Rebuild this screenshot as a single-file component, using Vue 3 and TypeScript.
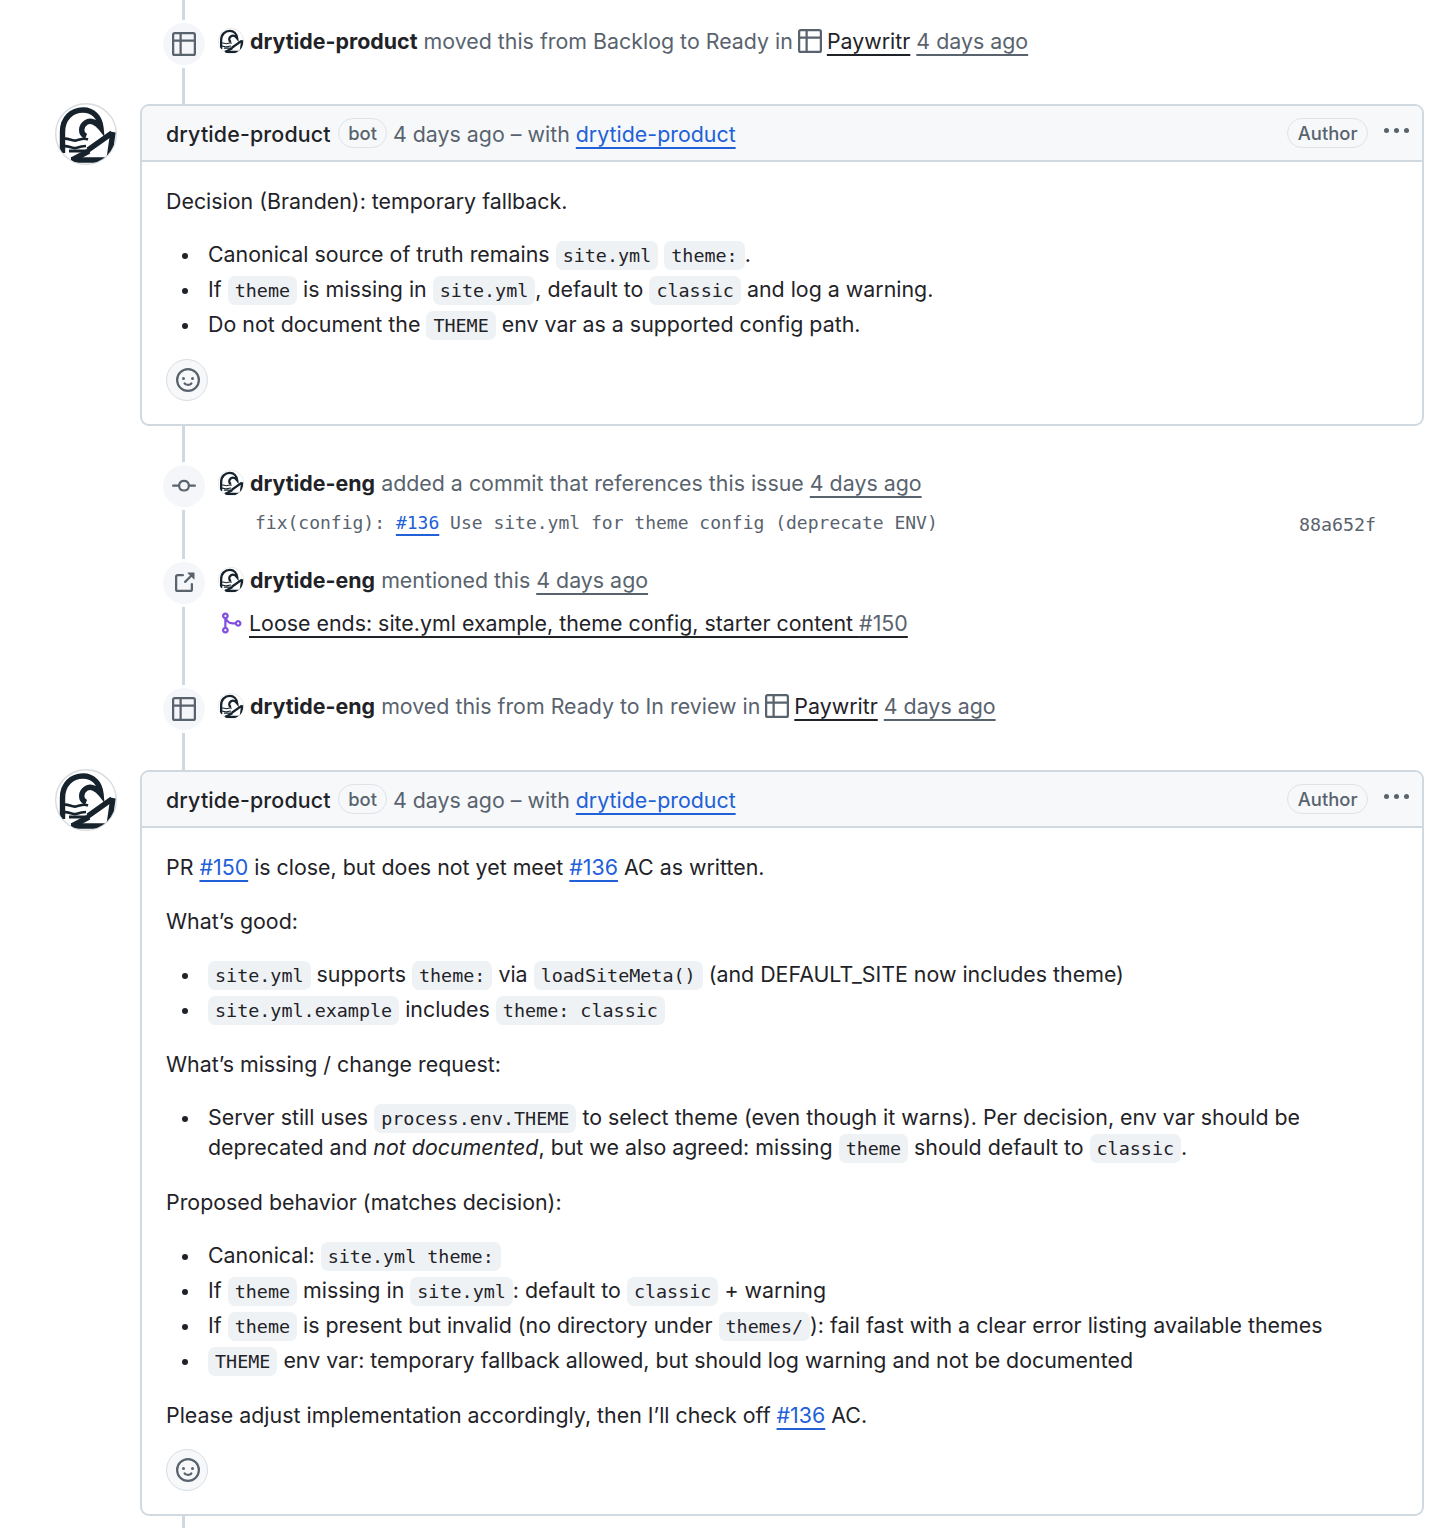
<script setup lang="ts">
const icons: Record<string, string> = {
  table: 'M0 1.75C0 .784.784 0 1.75 0h12.5C15.216 0 16 .784 16 1.75v12.5A1.75 1.75 0 0 1 14.25 16H1.75A1.75 1.75 0 0 1 0 14.25ZM6.5 6.5v8h7.75a.25.25 0 0 0 .25-.25V6.5Zm8-1.5V1.75a.25.25 0 0 0-.25-.25H6.5V5Zm-13 1.5v7.75c0 .138.112.25.25.25H5v-8ZM5 5V1.5H1.75a.25.25 0 0 0-.25.25V5Z',
  commit: 'M11.93 8.5a4.002 4.002 0 0 1-7.86 0H.75a.75.75 0 0 1 0-1.5h3.32a4.002 4.002 0 0 1 7.86 0h3.32a.75.75 0 0 1 0 1.5Zm-1.43-.75a2.5 2.5 0 1 0-5 0 2.5 2.5 0 0 0 5 0Z',
  external: 'M3.75 2h3.5a.75.75 0 0 1 0 1.5h-3.5a.25.25 0 0 0-.25.25v8.5c0 .138.112.25.25.25h8.5a.25.25 0 0 0 .25-.25v-3.5a.75.75 0 0 1 1.5 0v3.5A1.75 1.75 0 0 1 12.25 14h-8.5A1.75 1.75 0 0 1 2 12.25v-8.5C2 2.784 2.784 2 3.75 2Zm6.854-1h4.146a.25.25 0 0 1 .25.25v4.146a.25.25 0 0 1-.427.177L13.03 4.03 9.28 7.78a.751.751 0 0 1-1.042-.018.751.751 0 0 1-.018-1.042l3.75-3.75-1.543-1.543A.25.25 0 0 1 10.604 1Z',
  merge: 'M5.45 5.154A4.25 4.25 0 0 0 9.25 7.5h1.378a2.251 2.251 0 1 1 0 1.5H9.25A5.734 5.734 0 0 1 5 7.123v3.505a2.25 2.25 0 1 1-1.5 0V5.372a2.25 2.25 0 1 1 1.95-.218ZM4.25 13.5a.75.75 0 1 0 0-1.5.75.75 0 0 0 0 1.5Zm8.5-4.5a.75.75 0 1 0 0-1.5.75.75 0 0 0 0 1.5ZM5 3.25a.75.75 0 1 0 0 .005V3.25Z',
  smiley: 'M8 0a8 8 0 1 1 0 16A8 8 0 0 1 8 0ZM1.5 8a6.5 6.5 0 1 0 13 0 6.5 6.5 0 0 0-13 0Zm3.82 1.636a.75.75 0 0 1 1.038.175l.007.009c.103.118.22.222.35.31.264.178.683.37 1.285.37.602 0 1.02-.192 1.285-.371.13-.088.247-.192.35-.31l.007-.008a.75.75 0 0 1 1.222.87l-.022-.015c.02.013.021.015.021.015v.001l-.001.002-.002.003-.005.007-.014.019a2.066 2.066 0 0 1-.184.213c-.16.166-.338.316-.53.445-.63.418-1.37.638-2.127.629-.946 0-1.652-.308-2.126-.63a3.331 3.331 0 0 1-.715-.657l-.014-.02-.005-.006-.002-.003v-.002h-.001l.613-.432-.614.43a.75.75 0 0 1 .183-1.044ZM12 7a1 1 0 1 1-2 0 1 1 0 0 1 2 0ZM5 8a1 1 0 1 1 0-2 1 1 0 0 1 0 2Zm5.25 2.25.592.416a97.71 97.71 0 0 0-.592-.416Z',
}
</script>

<template>
  <div class="page">
    <div class="rail"></div>
    <svg width="0" height="0" class="defs" aria-hidden="true">
      <symbol id="logo" viewBox="0 0 62 62">
        <clipPath id="logo-clip"><circle cx="31" cy="31" r="30" /></clipPath>
        <circle cx="31" cy="31" r="30.300" fill="#fff" stroke="#d8dce0" stroke-width="1.400" />
        <g clip-path="url(#logo-clip)" fill="none" stroke="#16232d">
          <path d="M7.500 50V29C7.500 15 17 7 28 7 38 7 45 14 46 25 41 18.500 35 17 31 19.500 25.500 23 25 31 31 33.500" stroke-width="5.400" />
          <path d="M7 36.500c5-3 9 2 14 1s7-3 12-1M7 44c5-3 9 2 14 1 3-1 6-2 10-2" stroke-width="2.600" />
          <path d="M58 29 54 57H16M57 30 33 47" stroke-width="5.400" />
          <path d="M14 48H35" stroke-width="3" />
          <path d="M34 48 17 57" stroke-width="5.400" />
        </g>
      </symbol>
    </svg>

    <div class="event first">
      <span class="badge"><svg class="oct" viewBox="0 0 16 16"><path :d="icons.table" /></svg></span>
      <div class="event-main">
        <div class="line">
          <svg class="mini"><use href="#logo" /></svg>
          <strong>drytide-product</strong>
          <span class="muted">moved this from Backlog to Ready in</span>
          <svg class="oct inline-oct" viewBox="0 0 16 16"><path :d="icons.table" /></svg>
          <a class="plain">Paywritr</a>
          <a class="time">4 days ago</a>
        </div>
      </div>
    </div>

    <div class="comment">
      <svg class="avatar"><use href="#logo" /></svg>
      <div class="card">
        <div class="card-head">
          <span class="author">drytide-product</span>
          <span class="pill">bot</span>
          <span class="head-meta">4 days ago – with <a class="link">drytide-product</a></span>
          <span class="pill author-pill">Author</span>
          <span class="dots"><i></i><i></i><i></i></span>
        </div>
        <div class="card-body body-a">
          <p>Decision (Branden): temporary fallback.</p>
          <ul>
            <li>Canonical source of truth remains <code>site.yml</code> <code>theme:</code>.</li>
            <li>If <code>theme</code> is missing in <code>site.yml</code>, default to <code>classic</code> and log a warning.</li>
            <li>Do not document the <code>THEME</code> env var as a supported config path.</li>
          </ul>
          <button class="react"><svg class="oct" viewBox="0 0 16 16"><path :d="icons.smiley" /></svg></button>
        </div>
      </div>
    </div>

    <div class="event second">
      <span class="badge"><svg class="oct" viewBox="0 0 16 16"><path :d="icons.commit" /></svg></span>
      <div class="event-main">
        <div class="line">
          <svg class="mini"><use href="#logo" /></svg>
          <strong>drytide-eng</strong>
          <span class="muted">added a commit that references this issue</span>
          <a class="time">4 days ago</a>
        </div>
        <div class="commit">
          <span>fix(config): <a class="link">#136</a> Use site.yml for theme config (deprecate ENV)</span>
          <span class="sha">88a652f</span>
        </div>
      </div>
    </div>

    <div class="event third">
      <span class="badge"><svg class="oct" viewBox="0 0 16 16"><path :d="icons.external" /></svg></span>
      <div class="event-main">
        <div class="line">
          <svg class="mini"><use href="#logo" /></svg>
          <strong>drytide-eng</strong>
          <span class="muted">mentioned this</span>
          <a class="time">4 days ago</a>
        </div>
        <div class="line pr-line">
          <svg class="oct merge" viewBox="0 0 16 16"><path :d="icons.merge" /></svg>
          <a class="plain">Loose ends: site.yml example, theme config, starter content <span class="muted">#150</span></a>
        </div>
      </div>
    </div>

    <div class="event fourth">
      <span class="badge"><svg class="oct" viewBox="0 0 16 16"><path :d="icons.table" /></svg></span>
      <div class="event-main">
        <div class="line">
          <svg class="mini"><use href="#logo" /></svg>
          <strong>drytide-eng</strong>
          <span class="muted">moved this from Ready to In review in</span>
          <svg class="oct inline-oct" viewBox="0 0 16 16"><path :d="icons.table" /></svg>
          <a class="plain">Paywritr</a>
          <a class="time">4 days ago</a>
        </div>
      </div>
    </div>

    <div class="comment comment-b">
      <svg class="avatar"><use href="#logo" /></svg>
      <div class="card">
        <div class="card-head">
          <span class="author">drytide-product</span>
          <span class="pill">bot</span>
          <span class="head-meta">4 days ago – with <a class="link">drytide-product</a></span>
          <span class="pill author-pill">Author</span>
          <span class="dots"><i></i><i></i><i></i></span>
        </div>
        <div class="card-body">
          <p>PR <a class="link">#150</a> is close, but does not yet meet <a class="link">#136</a> AC as written.</p>
          <p>What’s good:</p>
          <ul>
            <li><code>site.yml</code> supports <code>theme:</code> via <code>loadSiteMeta()</code> (and DEFAULT_SITE now includes theme)</li>
            <li><code>site.yml.example</code> includes <code>theme: classic</code></li>
          </ul>
          <p>What’s missing / change request:</p>
          <ul>
            <li>Server still uses <code>process.env.THEME</code> to select theme (even though it warns). Per decision, env var should be deprecated and <em>not documented</em>, but we also agreed: missing <code>theme</code> should default to <code>classic</code>.</li>
          </ul>
          <p>Proposed behavior (matches decision):</p>
          <ul>
            <li>Canonical: <code>site.yml theme:</code></li>
            <li>If <code>theme</code> missing in <code>site.yml</code>: default to <code>classic</code> + warning</li>
            <li>If <code>theme</code> is present but invalid (no directory under <code>themes/</code>): fail fast with a clear error listing available themes</li>
            <li><code>THEME</code> env var: temporary fallback allowed, but should log warning and not be documented</li>
          </ul>
          <p class="last">Please adjust implementation accordingly, then I’ll check off <a class="link">#136</a> AC.</p>
          <button class="react"><svg class="oct" viewBox="0 0 16 16"><path :d="icons.smiley" /></svg></button>
        </div>
      </div>
    </div>
  </div>
</template>

<style>
html, body { margin: 0; background: #fff; }
</style>

<style scoped>
.page {
  position: relative;
  width: 1452px;
  height: 1528px;
  box-sizing: border-box;
  padding: 23px 28px 0 55px;
  overflow: hidden;
  font-family: Inter, "Liberation Sans", sans-serif;
  font-size: 21.38px;
  line-height: 30px;
  color: #1f2328;
  background: #fff;
}
.defs { position: absolute; }
.rail {
  position: absolute;
  left: 182px;
  top: 0;
  bottom: 0;
  width: 3px;
  background: #d1d9e0;
}
.event {
  position: relative;
  display: flex;
  gap: 13px;
  margin-left: 108px;
}
.badge {
  flex: none;
  width: 42px;
  height: 42px;
  border-radius: 50%;
  background: #f4f6f9;
  box-shadow: 0 0 0 3px #fff;
  display: flex;
  align-items: center;
  justify-content: center;
}
.oct { width: 24px; height: 24px; fill: #59636e; display: block; }
.event-main { flex: 1; min-width: 0; padding-right: 48px; }
.line {
  display: flex;
  align-items: center;
  gap: 6px;
  height: 36px;
  white-space: pre;
}
.mini { width: 26px; height: 26px; flex: none; }
strong { font-weight: 700; }
.muted { color: #59636e; }
.plain { color: #1f2328; text-decoration: underline 2px; text-underline-offset: 5px; text-decoration-skip-ink: none; }
.time { color: #59636e; text-decoration: underline 2px; text-underline-offset: 5px; text-decoration-skip-ink: none; }
.link { color: #2160d8; text-decoration: underline 2px; text-underline-offset: 5px; text-decoration-skip-ink: none; }
.inline-oct { margin-right: -1px; margin-left: -1px; }
.comment {
  position: relative;
  display: flex;
  gap: 23px;
  margin-top: 39px;
}
.comment-b { margin-top: 40px; }
.avatar { width: 62px; height: 62px; flex: none; margin-top: -1.500px; }
.card {
  flex: 1;
  min-width: 0;
  border: 2px solid #d1d9e0;
  border-radius: 9px;
  background: #fff;
  overflow: hidden;
}
.card-head {
  display: flex;
  align-items: center;
  gap: 7px;
  height: 56px;
  box-sizing: border-box;
  padding: 2px 13px 0 24px;
  background: #f6f8fa;
  border-bottom: 2px solid #d1d9e0;
  white-space: nowrap;
}
.author { font-weight: 500; letter-spacing: 0.15px; }
.pill {
  display: inline-flex;
  align-items: center;
  height: 30px;
  box-sizing: border-box;
  padding: 0 9.500px;
  border: 1.500px solid #dfe4e9;
  border-radius: 15px;
  font-size: 18.400px;
  font-weight: 500;
  color: #59636e;
  margin-top: -2px;
}
.head-meta { color: #59636e; flex: 1; margin-left: -1.500px; }
.author-pill { margin-right: 9px; }
.dots { display: flex; gap: 5px; margin-bottom: 7px; }
.dots i { width: 5px; height: 5px; border-radius: 50%; background: #59636e; }
.card-body { padding: 24px 24px 23px; }
.card-body p { margin: 0 0 24px; }
.card-body ul { margin: -1px 0 25px; padding: 0 0 0 42px; list-style: none; }
.card-body li { position: relative; }
.card-body li + li { margin-top: 5px; }
.card-body li::before {
  content: "";
  position: absolute;
  left: -26px;
  top: 14px;
  width: 6px;
  height: 6px;
  border-radius: 50%;
  background: #1f2328;
}
.body-a ul { margin-bottom: 20px; }
.last.last { margin-bottom: 19px; }
code {
  font-family: "DejaVu Sans Mono", "Liberation Mono", monospace;
  font-size: 18.4px;
  line-height: 18px;
  padding: 4px 7px;
  background: #eff2f5;
  border-radius: 7px;
}
.react {
  display: flex;
  align-items: center;
  justify-content: center;
  width: 42px;
  height: 42px;
  padding: 0 0 0 1px;
  border: 1.5px solid #d8dee4;
  border-radius: 50%;
  background: #f6f8fa;
}
.second { margin-top: 39px; }
.third { margin-top: 22px; }
.fourth { margin-top: 47px; }
.commit {
  display: flex;
  justify-content: space-between;
  margin-top: 7px;
  padding-left: 37px;
  font-family: "DejaVu Sans Mono", "Liberation Mono", monospace;
  font-size: 18px;
  line-height: 30px;
  color: #59636e;
  white-space: pre;
}
.sha { margin-top: 2px; font-size: 18.3px; }
.pr-line { margin-top: 7px; }
.merge { fill: #8250df; margin-left: 1px; }
</style>
